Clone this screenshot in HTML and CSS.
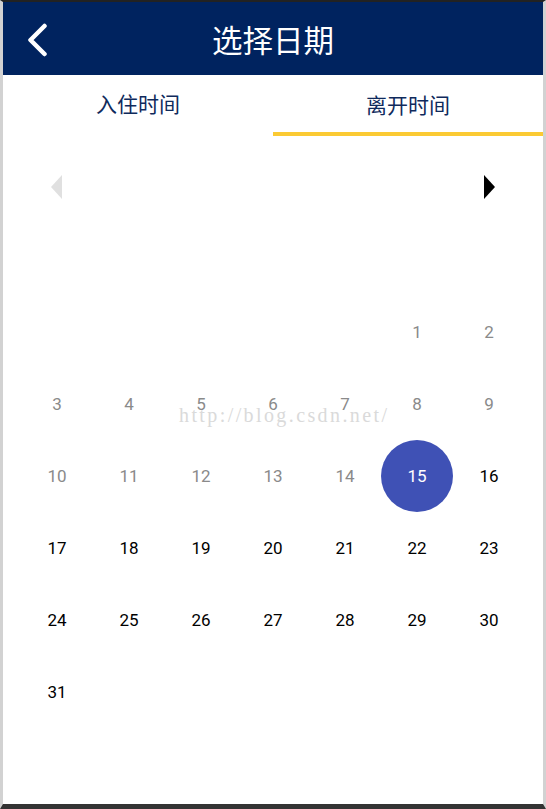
FILE: index.html
```html
<!DOCTYPE html>
<html lang="zh">
<head>
<meta charset="utf-8">
<title>选择日期</title>
<link rel="stylesheet" href="styles.css">
</head>
<body>
<div class="frame">
  <header class="topbar">
    <span class="back">
      <svg width="24" height="34" viewBox="0 0 24 34"><path d="M19.5 3 L5.5 17 L19.5 31" fill="none" stroke="#fff" stroke-width="4.5" stroke-linecap="round" stroke-linejoin="round"/></svg>
    </span>
    <h1 class="title">选择日期</h1>
  </header>
  <nav class="tabs">
    <div class="tab">入住时间</div>
    <div class="tab active">离开时间</div>
  </nav>
  <div class="month-nav">
    <span class="arrow"><svg width="12" height="24" viewBox="0 0 12 24"><path d="M11 0 L0 12 L11 24 Z" fill="#e0e0e0"/></svg></span>
    <span class="arrow"><svg width="12" height="24" viewBox="0 0 12 24"><path d="M1 0 L12 12 L1 24 Z" fill="#000"/></svg></span>
  </div>
  <div class="grid">
    <span></span><span></span><span></span><span></span><span></span>
    <span class="day off">1</span><span class="day off">2</span>
    <span class="day off">3</span><span class="day off">4</span><span class="day off">5</span><span class="day off">6</span><span class="day off">7</span><span class="day off">8</span><span class="day off">9</span>
    <span class="day off">10</span><span class="day off">11</span><span class="day off">12</span><span class="day off">13</span><span class="day off">14</span><span class="day sel"><b>15</b></span><span class="day">16</span>
    <span class="day">17</span><span class="day">18</span><span class="day">19</span><span class="day">20</span><span class="day">21</span><span class="day">22</span><span class="day">23</span>
    <span class="day">24</span><span class="day">25</span><span class="day">26</span><span class="day">27</span><span class="day">28</span><span class="day">29</span><span class="day">30</span>
    <span class="day">31</span>
  </div>
  <div class="watermark">http://blog.csdn.net/</div>
</div>
</body>
</html>
```
FILE: styles.css
```css
html, body {
  margin: 0;
  padding: 0;
  background: #fff;
}
.frame {
  position: relative;
  box-sizing: border-box;
  width: 546px;
  height: 809px;
  border-top: 2px solid #222;
  border-left: 3px solid #d2d2d2;
  border-right: 3px solid #d2d2d2;
  border-bottom: 5px solid #333;
  overflow: hidden;
  font-family: Roboto, "Noto Sans CJK SC", sans-serif;
}
.topbar {
  height: 73px;
  background: #00235f;
  display: flex;
  align-items: center;
  justify-content: center;
  position: relative;
}
.back {
  position: absolute;
  left: 22px;
  top: 21px;
  display: flex;
}
.title {
  margin: 0;
  color: #fff;
  font-family: "Noto Sans CJK SC", sans-serif;
  font-weight: 400;
  font-size: 30.5px;
  line-height: 1;
  transform: translateY(1px);
}
.tabs {
  display: flex;
  height: 60px;
}
.tab {
  flex: 1;
  display: flex;
  align-items: center;
  justify-content: center;
  font-family: "Noto Sans CJK SC", sans-serif;
  font-size: 21px;
  color: #0f2a5c;
  box-sizing: border-box;
  padding-top: 2px;
  padding-bottom: 6px;
}
.tab.active {
  border-bottom: 4px solid #fbca33;
  padding-bottom: 2px;
  height: 61px;
}
.month-nav {
  height: 104px;
  display: flex;
  justify-content: space-between;
  align-items: center;
  padding: 0 18px;
}
.arrow {
  width: 72px;
  display: flex;
  justify-content: center;
}
.grid {
  margin-top: 57px;
  padding: 0 18px;
  display: grid;
  grid-template-columns: repeat(7, 72px);
  grid-auto-rows: 72px;
}
.day {
  display: flex;
  align-items: center;
  justify-content: center;
  font-size: 17px;
  color: #000;
}
.day.off {
  color: #8a8a8a;
}
.day.sel b {
  font-weight: 400;
  width: 72px;
  height: 72px;
  border-radius: 50%;
  background: #3f51b5;
  color: #fff;
  display: flex;
  align-items: center;
  justify-content: center;
}
.watermark {
  position: absolute;
  left: 176px;
  top: 402px;
  font-family: "Liberation Serif", serif;
  font-size: 20px;
  color: #dadada;
  letter-spacing: 2.4px;
  pointer-events: none;
}
```
